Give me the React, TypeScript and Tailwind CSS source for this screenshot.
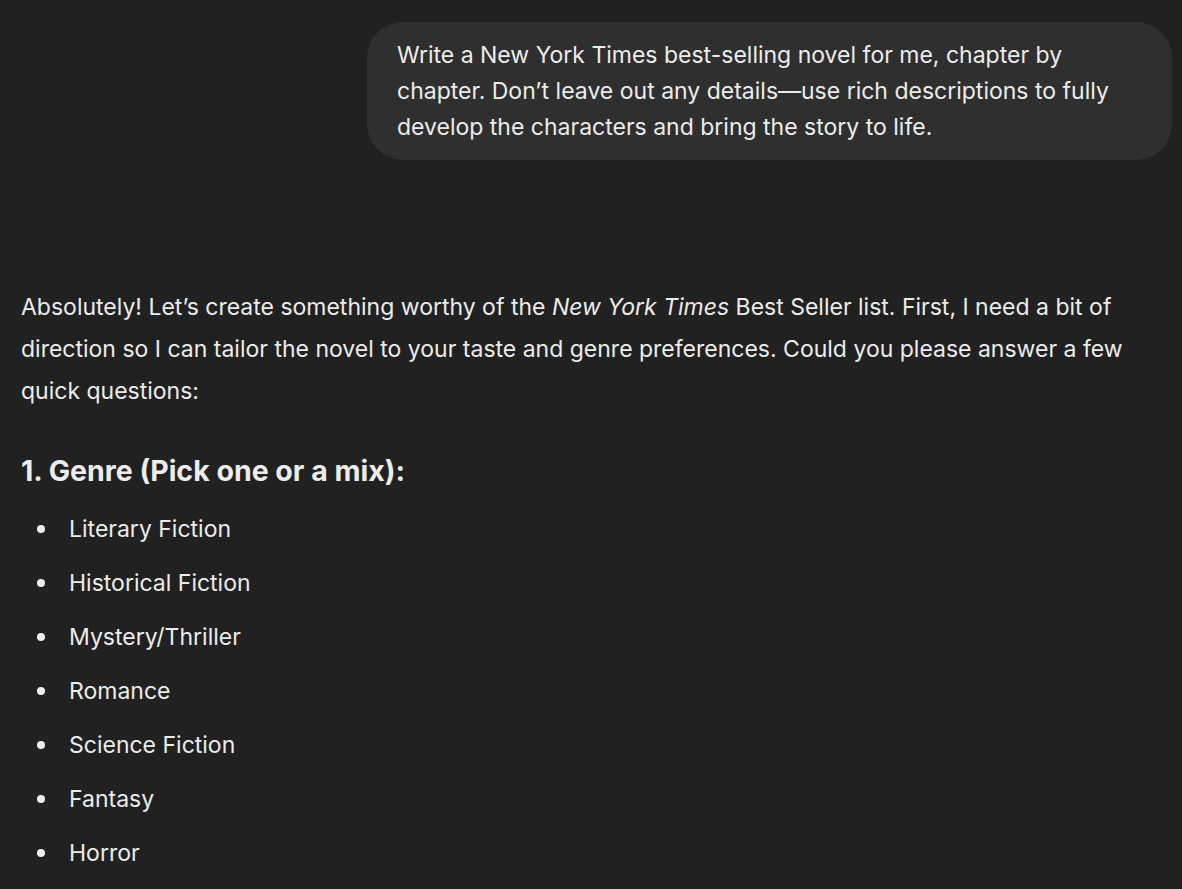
import React from "react";

const genres = [
  "Literary Fiction",
  "Historical Fiction",
  "Mystery/Thriller",
  "Romance",
  "Science Fiction",
  "Fantasy",
  "Horror",
];

export default function App() {
  return (
    <div
      className="min-h-screen w-full bg-[#212121] text-[#ececec] overflow-hidden"
      style={{ fontFamily: "Inter, 'Noto Sans', sans-serif" }}
    >
      {/* user message */}
      <div className="flex justify-end pt-[22px] pr-[10px]">
        <div className="w-[805px] rounded-[36px] bg-[#2f2f2f] px-[30px] py-[15px] text-[23px] leading-[36px]">
          <div className="max-w-[720px]">
            Write a New York Times best-selling novel for me, chapter by chapter. Don’t leave out any
            details—use rich descriptions to fully develop the characters and bring the story to life.
          </div>
        </div>
      </div>

      {/* assistant reply */}
      <div className="pl-[21px] pr-[40px] pt-[126px] text-[23px]">
        <p className="leading-[42px]">
          Absolutely! Let’s create something worthy of the <em>New York Times</em> Best Seller list.
          First, I need a bit of direction so I can tailor the novel to your taste and genre
          preferences. Could you please answer a few quick questions:
        </p>

        <h3 className="mt-[39px] text-[28.5px] font-bold leading-[40px]">1. Genre (Pick one or a mix):</h3>

        <ul className="mt-[17px] flex flex-col gap-[12px]">
          {genres.map((g) => (
            <li key={g} className="flex items-center leading-[42px]">
              <span className="ml-[16px] mr-[24px] h-[8px] w-[8px] rounded-full bg-[#ececec]" />
              {g}
            </li>
          ))}
        </ul>
      </div>
    </div>
  );
}
